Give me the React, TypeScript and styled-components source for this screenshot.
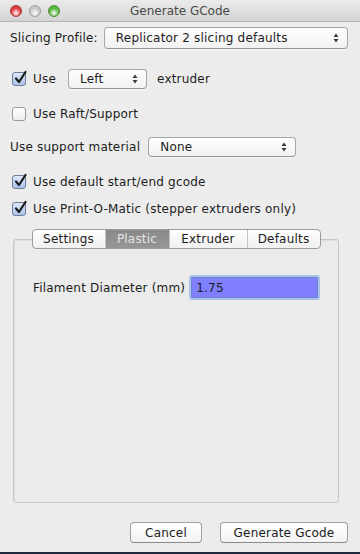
import styled, { createGlobalStyle } from "styled-components";

const GlobalStyle = createGlobalStyle`
  html, body {
    margin: 0;
    padding: 0;
    background: #1d2a3c;
  }
  body {
    font-family: "DejaVu Sans", "Liberation Sans", sans-serif;
    font-size: 12px;
    letter-spacing: 0.2px;
    color: #1c1c1c;
  }
`;

const Window = styled.div`
  width: 360px;
  height: 552px;
  background: #ececec;
  display: flex;
  flex-direction: column;
  overflow: hidden;
`;

const TitleBar = styled.div`
  height: 22px;
  flex: none;
  position: relative;
  display: flex;
  align-items: center;
  justify-content: center;
  background: linear-gradient(#ebebeb, #d3d3d3);
  border-bottom: 1px solid #b4b4b4;
  box-sizing: border-box;
  color: #4a4a4a;
  letter-spacing: 0;
`;

const Lights = styled.div`
  position: absolute;
  left: 10px;
  top: 5px;
  display: flex;
  gap: 7px;
`;

const Light = styled.span<{ $color: string; $edge: string }>`
  width: 12px;
  height: 12px;
  border-radius: 50%;
  box-sizing: border-box;
  border: 1px solid ${({ $edge }) => $edge};
  background: radial-gradient(circle at 50% 70%, #ffffff 0%, ${({ $color }) => $color} 55%);
`;

const Content = styled.div`
  flex: 1;
  display: flex;
  flex-direction: column;
  padding: 0 10px;
`;

const Row = styled.div<{ $top: number; $indent?: number; $height?: number }>`
  display: flex;
  align-items: center;
  height: ${({ $height }) => $height ?? 20}px;
  margin-top: ${({ $top }) => $top}px;
  padding-left: ${({ $indent }) => $indent ?? 0}px;
`;

const Label = styled.span<{ $gap?: number; $before?: number }>`
  margin-right: ${({ $gap }) => $gap ?? 0}px;
  margin-left: ${({ $before }) => $before ?? 0}px;
  white-space: nowrap;
`;

const SelectBox = styled.div<{ $width: number; $height?: number }>`
  width: ${({ $width }) => $width}px;
  height: ${({ $height }) => $height ?? 20}px;
  box-sizing: border-box;
  border: 1px solid #a6a6a6;
  border-bottom-color: #949494;
  border-radius: 4px;
  background: linear-gradient(#ffffff, #f1f1f1);
  display: flex;
  align-items: center;
  padding: 0 8px 0 11px;
  box-shadow: 0 1px 0 rgba(255, 255, 255, 0.6);
  span {
    flex: 1;
  }
`;

const Checkbox = styled.span<{ $checked?: boolean }>`
  width: 14px;
  height: 14px;
  box-sizing: border-box;
  border-radius: 3px;
  border: 1px solid ${({ $checked }) => ($checked ? "#6e7c98" : "#9a9a9a")};
  background: ${({ $checked }) =>
    $checked ? "linear-gradient(#dfe9fb, #a9c1ea)" : "linear-gradient(#ffffff, #eeeeee)"};
  margin-right: 7px;
  position: relative;
  flex: none;
  svg {
    position: absolute;
    left: 1px;
    top: -3px;
  }
`;

const Panel = styled.div`
  margin: 20px 0 0 3px;
  width: 326px;
  height: 264px;
  box-sizing: border-box;
  border: 1px solid #c6c6c6;
  border-radius: 3px;
  background: #ebebeb;
  box-shadow: inset 1px 1px 0 #dedede;
  display: flex;
  flex-direction: column;
`;

const TabBar = styled.div`
  margin: -11px auto 0;
  display: flex;
  height: 20px;
  box-sizing: border-box;
  border: 1px solid #9c9c9c;
  border-radius: 4px;
  overflow: hidden;
  background: linear-gradient(#ffffff, #f0f0f0);
`;

const Tab = styled.div<{ $width: number; $active?: boolean; $last?: boolean }>`
  width: ${({ $width }) => $width}px;
  display: flex;
  align-items: center;
  justify-content: center;
  border-right: ${({ $last }) => ($last ? "none" : "1px solid #c4c4c4")};
  background: ${({ $active }) => ($active ? "linear-gradient(#8a8a8a, #969696)" : "transparent")};
  color: ${({ $active }) => ($active ? "#e3e3e3" : "#1c1c1c")};
`;

const FieldRow = styled.div`
  display: flex;
  align-items: center;
  margin-top: 28px;
  padding-left: 19px;
  height: 21px;
`;

const Input = styled.div`
  margin-left: 6px;
  width: 127px;
  height: 21px;
  box-sizing: border-box;
  background: #8080ff;
  border: 1px solid #6f86c2;
  box-shadow: 0 0 0 2px #a9c3ec;
  border-radius: 1px;
  padding: 0 4px;
  display: flex;
  align-items: center;
`;

const Footer = styled.div`
  display: flex;
  justify-content: flex-end;
  gap: 18px;
  margin-top: 19px;
  padding-right: 2px;
`;

const Button = styled.div<{ $width: number }>`
  width: ${({ $width }) => $width}px;
  height: 21px;
  box-sizing: border-box;
  border: 1px solid #9f9f9f;
  border-bottom-color: #8a8a8a;
  border-radius: 4px;
  background: linear-gradient(#ffffff, #f2f2f2);
  display: flex;
  align-items: center;
  justify-content: center;
`;

const Check = () => (
  <svg width="14" height="15" viewBox="0 0 14 15">
    <path d="M2 8.5 L5 12 L11.5 2" fill="none" stroke="#1a1a1a" strokeWidth="2.2" strokeLinecap="round" strokeLinejoin="round" />
  </svg>
);

const Arrows = () => (
  <svg width="6" height="10" viewBox="0 0 6 10">
    <path d="M3 0.5 L5.5 4 L0.5 4 Z" fill="#3a3a3a" />
    <path d="M3 9.5 L5.5 6 L0.5 6 Z" fill="#3a3a3a" />
  </svg>
);

const Select = ({ text, width, height }: { text: string; width: number; height?: number }) => (
  <SelectBox $width={width} $height={height}>
    <span>{text}</span>
    <Arrows />
  </SelectBox>
);

const App = () => {
  return (
    <>
      <GlobalStyle />
      <Window>
        <TitleBar>
          <Lights>
            <Light $color="#e0393b" $edge="#a33b3c" />
            <Light $color="#c9c9c9" $edge="#9c9c9c" />
            <Light $color="#56b93b" $edge="#4e8a37" />
          </Lights>
          Generate GCode
        </TitleBar>
        <Content>
          <Row $top={5} $height={22}>
            <Label $gap={6}>Slicing Profile:</Label>
            <Select text="Replicator 2 slicing defaults" width={244} height={22} />
          </Row>
          <Row $top={20} $indent={2}>
            <Checkbox $checked>
              <Check />
            </Checkbox>
            <Label $gap={12}>Use</Label>
            <Select text="Left" width={79} />
            <Label $before={10}>extruder</Label>
          </Row>
          <Row $top={15} $indent={2}>
            <Checkbox />
            <Label>Use Raft/Support</Label>
          </Row>
          <Row $top={13}>
            <Label $gap={8}>Use support material</Label>
            <Select text="None" width={148} />
          </Row>
          <Row $top={15} $indent={2}>
            <Checkbox $checked>
              <Check />
            </Checkbox>
            <Label>Use default start/end gcode</Label>
          </Row>
          <Row $top={7} $indent={2}>
            <Checkbox $checked>
              <Check />
            </Checkbox>
            <Label>Use Print-O-Matic (stepper extruders only)</Label>
          </Row>
          <Panel>
            <TabBar>
              <Tab $width={72}>Settings</Tab>
              <Tab $width={63} $active>
                Plastic
              </Tab>
              <Tab $width={77}>Extruder</Tab>
              <Tab $width={72} $last>
                Defaults
              </Tab>
            </TabBar>
            <FieldRow>
              <Label>Filament Diameter (mm)</Label>
              <Input>1.75</Input>
            </FieldRow>
          </Panel>
          <Footer>
            <Button $width={72}>Cancel</Button>
            <Button $width={128}>Generate Gcode</Button>
          </Footer>
        </Content>
      </Window>
    </>
  );
};

export default App;
